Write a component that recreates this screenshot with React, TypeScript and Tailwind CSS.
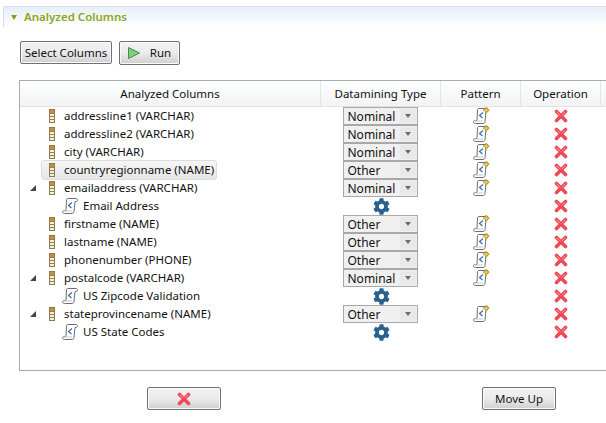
import { FaCog } from "react-icons/fa";

type Row = {
  name: string;
  kind: "column" | "pattern";
  type?: string;
  open?: boolean;
  selected?: boolean;
};

const rows: Row[] = [
  { name: "addressline1 (VARCHAR)", kind: "column", type: "Nominal" },
  { name: "addressline2 (VARCHAR)", kind: "column", type: "Nominal" },
  { name: "city (VARCHAR)", kind: "column", type: "Nominal" },
  { name: "countryregionname (NAME)", kind: "column", type: "Other", selected: true },
  { name: "emailaddress (VARCHAR)", kind: "column", type: "Nominal", open: true },
  { name: "Email Address", kind: "pattern" },
  { name: "firstname (NAME)", kind: "column", type: "Other" },
  { name: "lastname (NAME)", kind: "column", type: "Other" },
  { name: "phonenumber (PHONE)", kind: "column", type: "Other" },
  { name: "postalcode (VARCHAR)", kind: "column", type: "Nominal", open: true },
  { name: "US Zipcode Validation", kind: "pattern" },
  { name: "stateprovincename (NAME)", kind: "column", type: "Other", open: true },
  { name: "US State Codes", kind: "pattern" },
];

function ColumnIcon() {
  return (
    <svg width="6" height="14" viewBox="0 0 6 14" className="shrink-0">
      <rect x="0.5" y="0.5" width="5" height="13" fill="#f6eed8" stroke="#8f7a4e" />
      <rect x="1" y="1" width="4" height="3" fill="#cf8a3a" />
      <path d="M1 4.5h4M1 7.5h4M1 10.5h4" stroke="#8b8456" />
    </svg>
  );
}

function ScrollIcon({ plus }: { plus?: boolean }) {
  return (
    <svg width="17" height="18" viewBox="0 0 17 18" className="shrink-0">
      <path
        d="M5.500 1.500H14c1 0 1.500.7 1.500 1.500s-.5 1.500-1.500 1.500h-1l-1 10c-.1 1.200-.8 2-2 2H2.500c-1.200 0-2-.7-2-1.500s.7-1.500 1.800-1.500H4L4.500 3c0-.9.4-1.500 1-1.500z"
        fill="#fff"
        stroke="#6c6f74"
      />
      <path d="M10 5.500 6.500 8.500l3 2.500" fill="none" stroke="#2d6ca8" strokeWidth="1.100" />
      <path d="M2 14h8" stroke="#c8c9cc" />
      {plus && (
        <path
          d="M12.500 0.500h1.500v2h2v1.500h-2v2h-1.500v-2h-2V2.500h2z"
          fill="#f7d44f"
          stroke="#b08d1e"
          strokeWidth="0.600"
        />
      )}
    </svg>
  );
}

function RedX({ size = 14 }: { size?: number }) {
  return (
    <svg width={size} height={size} viewBox="0 0 14 14" className="shrink-0">
      <path d="M2.500 2.500 11.500 11.500M11.500 2.500 2.500 11.500" stroke="#ee4a55" strokeWidth="3.600" strokeLinecap="round" />
      <path d="M3 3 6 6M11 3 8 6" stroke="#fb9aa0" strokeWidth="1" strokeLinecap="round" />
    </svg>
  );
}

function Combo({ value }: { value: string }) {
  return (
    <div className="flex h-[18px] w-[75px] items-stretch border-[1.500px] border-[#a8a8a8] bg-[#f0f0f0]">
      <span className="flex-1 pl-[4px] text-[12px] leading-[18px] text-[#101010]">{value}</span>
      <span className="my-[1px] mr-[1px] flex w-[16px] items-center justify-center bg-[#e9e9e9]">
        <span className="h-0 w-0 border-x-[3.500px] border-t-[4px] border-x-transparent border-t-[#6a6a6a]" />
      </span>
    </div>
  );
}

const cols = "grid grid-cols-[301px_120px_80px_80px_1fr]";
const buttonClass =
  "flex items-center justify-center rounded-[2px] border border-[#707070] bg-gradient-to-b from-[#f2f2f2] via-[#ebebeb] to-[#cfcfcf] text-[11.500px] text-[#111] shadow-[inset_0_0_0_1px_#fafafa]";

export default function App() {
  return (
    <div
      className="h-[423px] w-[606px] overflow-hidden bg-white pt-[6px]"
      style={{ fontFamily: '"Noto Sans", sans-serif' }}
    >
      {/* Section header */}
      <div className="ml-[3px] flex h-[21px] items-center gap-[7px] rounded-tl-[3px] border-t border-l border-[#d5dfe9] bg-gradient-to-b from-[#e6eff8] to-white pl-[7px]">
        <span className="h-0 w-0 border-x-[3.500px] border-t-[5px] border-x-transparent border-t-[#8a9a1e]" />
        <span className="text-[11.500px] font-semibold text-[#8ea51c]">Analyzed Columns</span>
      </div>

      {/* Toolbar */}
      <div className="mt-[14px] flex gap-[7px] pl-[20px]">
        <button className={`${buttonClass} h-[23px] w-[92px]`}>Select Columns</button>
        <button className={`${buttonClass} h-[24px] w-[61px] gap-[9px] pr-[1px]`}>
          <svg width="14" height="14" viewBox="0 0 14 14">
            <path d="M1.500 1.500 12.500 7 1.500 12.500z" fill="#7fcf80" stroke="#3f8f4f" />
          </svg>
          <span>Run</span>
        </button>
      </div>

      {/* Table */}
      <div className="mt-[15px] ml-[19px] h-[291px] border-t border-b border-l border-[#ababab]">
        <div className={`${cols} h-[26px] border-b border-[#e2e2e2] bg-gradient-to-b from-white to-[#f1f3f5] text-[11.500px] leading-[26px] text-[#111]`}>
          <div className="border-r border-[#e4e4e4] text-center">Analyzed Columns</div>
          <div className="border-r border-[#e4e4e4] text-center">Datamining Type</div>
          <div className="border-r border-[#e4e4e4] text-center">Pattern</div>
          <div className="border-r border-[#e4e4e4] text-center">Operation</div>
          <div />
        </div>
        {rows.map((row) => (
          <div key={row.name} className={`${cols} h-[18px] text-[11.500px] leading-[18px] text-[#111]`}>
            {row.kind === "column" ? (
              <div className="flex items-center pl-[10px]">
                <span className="w-[12px]">
                  {row.open && (
                    <span className="block h-0 w-0 border-b-[6px] border-l-[6px] border-l-transparent border-b-[#444]" />
                  )}
                </span>
                <div
                  className={`flex h-[18px] items-center gap-[9px] rounded-[2px] pl-[7px] pr-[2px] ${
                    row.selected ? "bg-gradient-to-b from-[#f6f6f6] to-[#e6e6e6] outline outline-[#dcdcdc]" : ""
                  }`}
                >
                  <ColumnIcon />
                  <span className="whitespace-nowrap">{row.name}</span>
                </div>
              </div>
            ) : (
              <div className="flex items-center gap-[4px] pl-[42px]">
                <ScrollIcon />
                <span className="whitespace-nowrap">{row.name}</span>
              </div>
            )}
            <div className="flex items-center justify-center">
              {row.type ? (
                <span className="pr-[2px]">
                  <Combo value={row.type} />
                </span>
              ) : (
                <FaCog size={17} className="text-[#28608f]" />
              )}
            </div>
            <div className="flex items-center justify-center">{row.type && <ScrollIcon plus />}</div>
            <div className="flex items-center justify-center">
              <RedX />
            </div>
            <div />
          </div>
        ))}
      </div>

      {/* Footer buttons */}
      <div className="mt-[16px] flex pl-[147px]">
        <button className={`${buttonClass} h-[23px] w-[74px]`}>
          <RedX />
        </button>
        <button className={`${buttonClass} ml-[261px] h-[23px] w-[74px]`}>Move Up</button>
      </div>
    </div>
  );
}
